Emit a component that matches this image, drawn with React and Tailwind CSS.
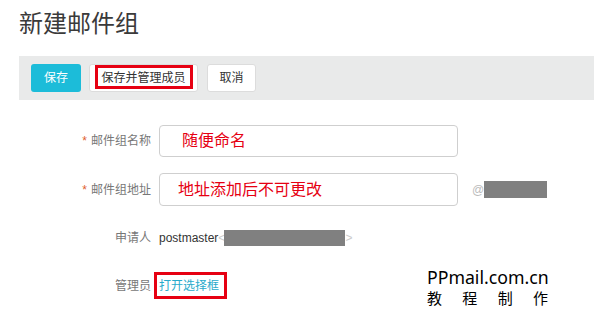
export default function App() {
  const font = { fontFamily: '"Liberation Sans", "Noto Sans CJK SC", sans-serif' };
  return (
    <div className="relative w-[594px] h-[317px] bg-white overflow-hidden" style={font}>
      <div className="pl-[19px] pt-[8px] text-[24px] leading-[32px] text-[#3a3a3a]">新建邮件组</div>
      <div className="ml-[19px] mt-[16px] h-[44px] bg-[#e9eaea] flex items-center pl-[12px]">
        <button className="w-[50px] h-[28px] rounded-[3px] bg-[#1cbcd9] text-white text-[12px]">保存</button>
        <button className="relative ml-[8px] w-[109px] h-[28px] rounded-[3px] bg-white border border-[#dcdcdc] text-[12px] text-[#333]">
          保存并管理成员
          <span className="absolute left-[5px] right-[4px] top-[0px] bottom-[2px] border-[3px] border-[#e60012]"></span>
        </button>
        <button className="ml-[9px] w-[49px] h-[28px] rounded-[3px] bg-white border border-[#dcdcdc] text-[12px] text-[#333]">取消</button>
      </div>

      <div className="mt-[25px] flex flex-col">
        <div className="flex items-center h-[32px]">
          <div className="w-[151px] text-right text-[12px] text-[#777]"><span className="text-[#e0602e] mr-[4px]">*</span>邮件组名称</div>
          <div className="ml-[8px] w-[299px] h-[32px] border border-[#cfcfcf] rounded-[4px] flex items-center pl-[22px] text-[16px] text-[#e60012]">随便命名</div>
        </div>
        <div className="mt-[16px] flex items-center h-[33px]">
          <div className="w-[151px] text-right text-[12px] text-[#777]"><span className="text-[#e0602e] mr-[4px]">*</span>邮件组地址</div>
          <div className="ml-[8px] w-[299px] h-[33px] border border-[#cfcfcf] rounded-[4px] flex items-center pl-[18px] text-[16px] text-[#e60012]">地址添加后不可更改</div>
          <div className="ml-[14px] flex items-center text-[12px] text-[#bbb]">@<span className="w-[63px] h-[17px] bg-[#808080]"></span></div>
        </div>
        <div className="mt-[22px] flex items-center h-[20px]">
          <div className="w-[151px] text-right text-[12px] text-[#777]">申请人</div>
          <div className="ml-[8px] flex items-center text-[12px] text-[#333]">
            postmaster<span className="text-[#ccc]">&lt;</span>
            <span className="w-[121px] h-[16px] bg-[#808080] -ml-[1px]"></span>
            <span className="text-[#ccc]">&gt;</span>
          </div>
        </div>
        <div className="mt-[28px] flex items-center h-[20px]">
          <div className="w-[151px] text-right text-[12px] text-[#777]">管理员</div>
          <div className="relative ml-[8px] text-[12px] text-[#2aaacb]">
            打开选择框
            <span className="absolute -left-[5px] -right-[8px] -top-[5px] -bottom-[4px] border-[3px] border-[#e60012]"></span>
          </div>
        </div>
      </div>

      <div className="absolute left-[427px] top-[266px] text-black" style={{ fontFamily: '"Noto Sans", "Noto Sans CJK SC", sans-serif' }}>
        <div className="text-[17.7px] leading-[22px]">PPmail.com.cn</div>
        <div className="text-[15px] leading-[20px] flex justify-between w-[121px]">
          <span>教</span><span>程</span><span>制</span><span>作</span>
        </div>
      </div>
    </div>
  );
}
